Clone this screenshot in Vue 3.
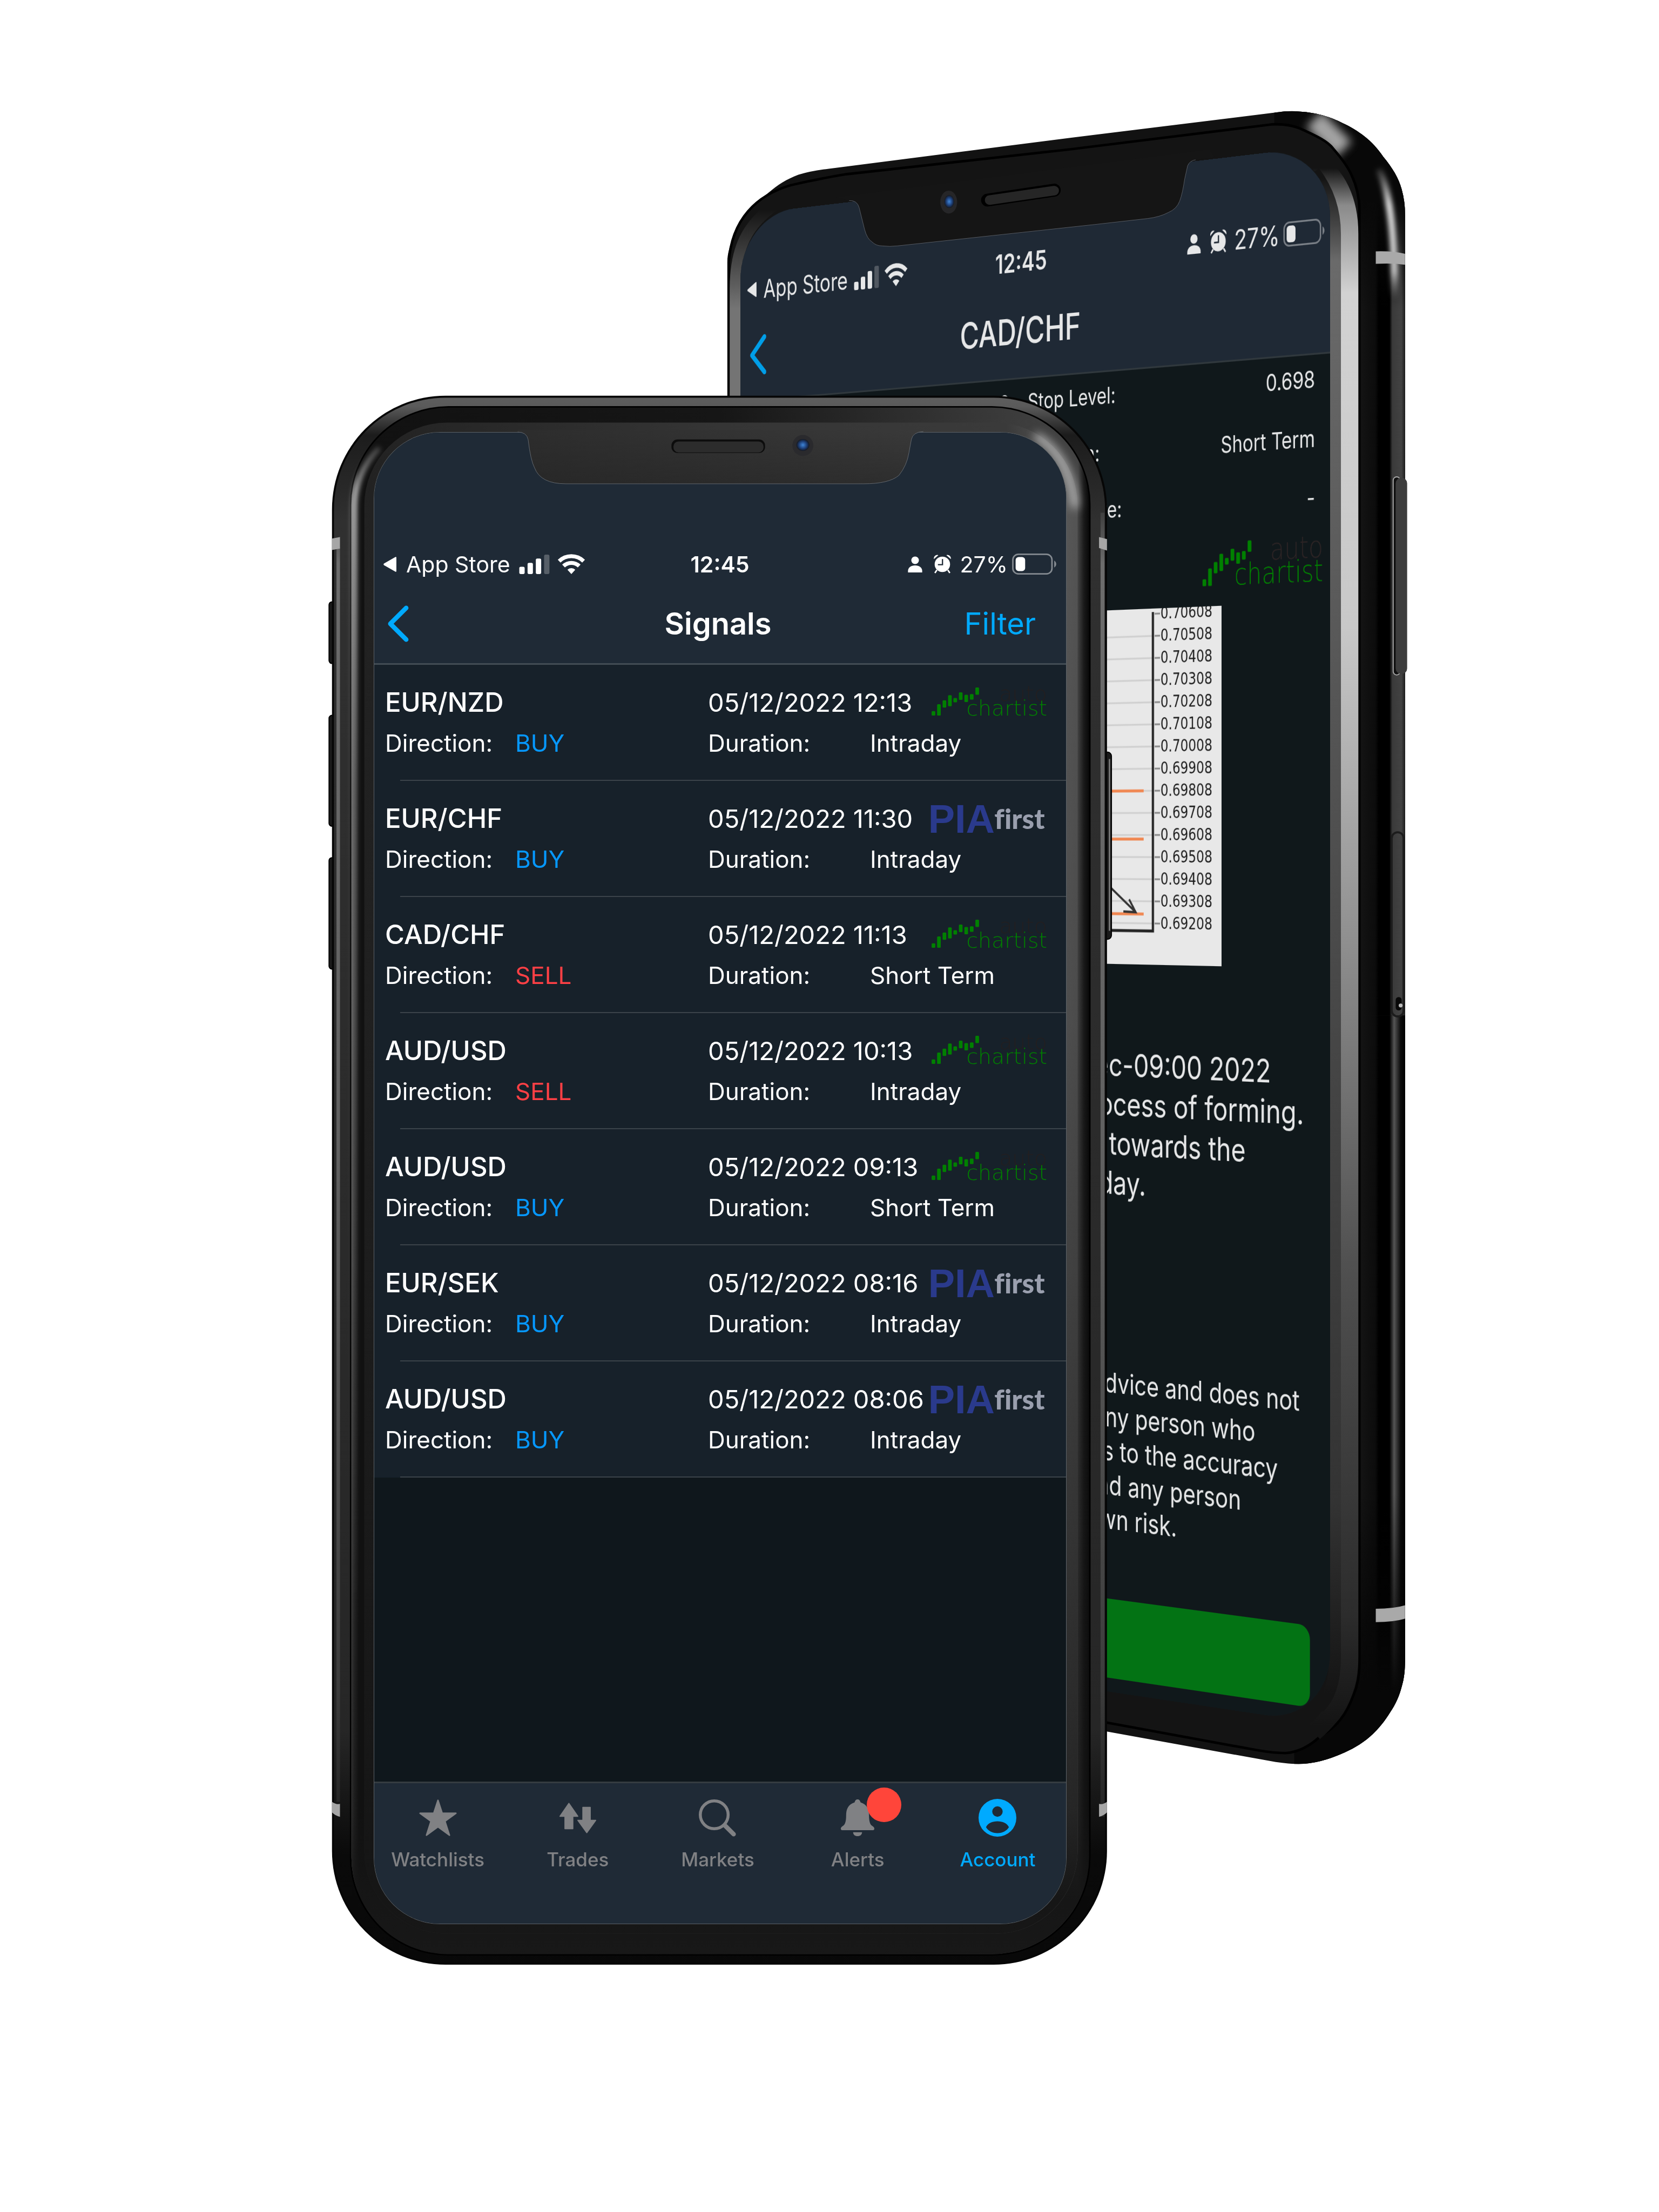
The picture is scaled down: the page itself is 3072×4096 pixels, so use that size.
<script setup>
const signals = [
  { pair: 'EUR/NZD', time: '05/12/2022 12:13', side: 'BUY', duration: 'Intraday', source: 'autochartist' },
  { pair: 'EUR/CHF', time: '05/12/2022 11:30', side: 'BUY', duration: 'Intraday', source: 'pia' },
  { pair: 'CAD/CHF', time: '05/12/2022 11:13', side: 'SELL', duration: 'Short Term', source: 'autochartist' },
  { pair: 'AUD/USD', time: '05/12/2022 10:13', side: 'SELL', duration: 'Intraday', source: 'autochartist' },
  { pair: 'AUD/USD', time: '05/12/2022 09:13', side: 'BUY', duration: 'Short Term', source: 'autochartist' },
  { pair: 'EUR/SEK', time: '05/12/2022 08:16', side: 'BUY', duration: 'Intraday', source: 'pia' },
  { pair: 'AUD/USD', time: '05/12/2022 08:06', side: 'BUY', duration: 'Intraday', source: 'pia' },
]

const tabs = [
  { name: 'Watchlists', icon: 'star' },
  { name: 'Trades', icon: 'trades' },
  { name: 'Markets', icon: 'search' },
  { name: 'Alerts', icon: 'bell', badge: true },
  { name: 'Account', icon: 'account', active: true },
]

// Candles of the Autochartist mark: x, top, bottom
const candles = [
  [278, 237, 264], [311, 196, 264], [344, 172, 216], [377, 141, 208], [409, 158, 184],
  [442, 124, 170], [475, 139, 183], [508, 135, 168], [541, 95, 139],
]

const levels = [
  '0.70608', '0.70508', '0.70408', '0.70308', '0.70208', '0.70108', '0.70008', '0.69908',
  '0.69808', '0.69708', '0.69608', '0.69508', '0.69408', '0.69308', '0.69208',
].map((label, i) => ({ label, y: 9 + 38 * i }))

const summary = [
  { text: 'Dec-09:00 2022', end: 1265 },
  { text: 'process of forming.', end: 1336 },
  { text: 'towards the', end: 1210 },
  { text: 'day.', end: 988 },
]

const disclaimer = [
  { text: 'advice and does not', end: 1327 },
  { text: 'any person who', end: 1231 },
  { text: 'as to the accuracy', end: 1280 },
  { text: 'and any person', end: 1200 },
  { text: 'own risk.', end: 1058 },
]
</script>

<template>
  <main class="stage">
    <svg class="defs" aria-hidden="true">
      <symbol id="i-caret" viewBox="0 0 26 28"><path d="M24 1.5v25q0 2-2 1L1 15.500q-1.500-1.500 0-3L22 .5q2-1 2 1z" fill="currentColor" /></symbol>
      <symbol id="i-bars" viewBox="0 0 62 40">
        <rect x="0" y="25" width="11" height="15" rx="3" fill="currentColor" />
        <rect x="17" y="17" width="11" height="23" rx="3" fill="currentColor" />
        <rect x="34" y="8" width="11" height="32" rx="3" fill="currentColor" />
        <rect x="51" y="0" width="11" height="40" rx="3" fill="currentColor" opacity=".25" />
      </symbol>
      <symbol id="i-wifi" viewBox="0 0 56 42">
        <g fill="none" stroke="currentColor" stroke-width="8">
          <path d="M3 14.500a36 36 0 0 1 50 0" />
          <path d="M12 24.500a23 23 0 0 1 32 0" />
        </g>
        <path d="M28 41l-8-9a11.500 11.500 0 0 1 16 0z" fill="currentColor" />
      </symbol>
      <symbol id="i-person" viewBox="0 0 28 32">
        <circle cx="14" cy="8" r="7.500" fill="currentColor" />
        <path d="M0 32v-3c0-7 6-11 14-11s14 4 14 11v3z" fill="currentColor" />
      </symbol>
      <symbol id="i-clock" viewBox="0 0 36 38">
        <path fill="currentColor" fill-rule="evenodd" d="M18 4a15.500 15.500 0 1 1 0 31a15.500 15.500 0 1 1 0-31zM17 9v10H9v2.500h10.500V9z" />
        <path d="M1 9a7 7 0 0 1 9-8zM35 9a7 7 0 0 0-9-8z" fill="currentColor" />
        <path d="M7 31l-4 6M29 31l4 6" stroke="currentColor" stroke-width="3" />
      </symbol>
      <symbol id="i-battery" viewBox="0 0 88 42">
        <rect x="1.500" y="1.500" width="78" height="39" rx="11" fill="none" stroke="currentColor" stroke-width="3" opacity=".45" />
        <rect x="7" y="7" width="19" height="28" rx="6" fill="currentColor" />
        <path d="M84 14q4 3 4 7t-4 7z" fill="currentColor" opacity=".45" />
      </symbol>
      <symbol id="i-back" viewBox="0 0 44 74"><path d="M38 6L7 37l31 31" fill="none" stroke="currentColor" stroke-width="9" stroke-linecap="round" stroke-linejoin="round" /></symbol>
      <symbol id="i-star" viewBox="0 0 76 76"><path d="M38 3l8.500 26H74L52 45l9 28-23-17-23 17 9-28L2 29h27.500z" fill="currentColor" stroke="currentColor" stroke-width="3" stroke-linejoin="round" /></symbol>
      <symbol id="i-trades" viewBox="0 0 76 76">
        <path d="M20 9l18 26H28v25H12V35H2zM56 68L38 43h10V17h15v26h11z" fill="currentColor" stroke="currentColor" stroke-width="2" stroke-linejoin="round" />
      </symbol>
      <symbol id="i-search" viewBox="0 0 76 76">
        <circle cx="31" cy="32" r="28" fill="none" stroke="currentColor" stroke-width="6" />
        <path d="M53 54l17 17" stroke="currentColor" stroke-width="9" stroke-linecap="round" />
      </symbol>
      <symbol id="i-bell" viewBox="0 0 76 76">
        <path d="M38 1c4 0 5 3 6 6 13 4 17 14 17 26 0 12 2 18 6 21 7 4 5 9 2 9H7c-3 0-5-5 2-9 4-3 6-9 6-21C15 21 19 11 32 7c1-3 2-6 6-6zM29 67h18c0 5-4 8-9 8s-9-3-9-8z" fill="currentColor" />
      </symbol>
      <symbol id="i-account" viewBox="0 0 76 76">
        <path fill="currentColor" fill-rule="evenodd" d="M38 0a38 38 0 1 1 0 76a38 38 0 1 1 0-76zM38 15a10.500 10.500 0 1 0 0 21a10.500 10.500 0 1 0 0-21zM15 57c4 7 13 12 23 12s19-5 23-12c-3-8-13-12-23-12s-20 4-23 12z" />
      </symbol>
    </svg>

    <!-- Rear phone: body -->
    <svg class="layer" viewBox="0 0 3333 4444" aria-hidden="true">
      <defs>
        <linearGradient id="rearSide" x1="2731" x2="2823" y1="0" y2="0" gradientUnits="userSpaceOnUse">
          <stop offset="0" stop-color="#141414" /><stop offset=".35" stop-color="#0c0c0c" />
          <stop offset=".42" stop-color="#000" /><stop offset=".66" stop-color="#000" />
          <stop offset=".72" stop-color="#3a3a3a" /><stop offset=".92" stop-color="#424242" /><stop offset="1" stop-color="#1c1c1c" />
        </linearGradient>
        <linearGradient id="rearSideLow" x1="2731" x2="2823" y1="0" y2="0" gradientUnits="userSpaceOnUse">
          <stop offset="0" stop-color="#141414" /><stop offset=".35" stop-color="#0c0c0c" />
          <stop offset=".42" stop-color="#000" /><stop offset=".66" stop-color="#000" />
          <stop offset=".76" stop-color="#555" /><stop offset=".9" stop-color="#0c0c0c" /><stop offset="1" stop-color="#000" />
        </linearGradient>
        <linearGradient id="rearSilver" x1="0" x2="0" y1="300" y2="3500" gradientUnits="userSpaceOnUse">
          <stop offset=".012" stop-color="#141414" /><stop offset=".035" stop-color="#8a8a8a" /><stop offset=".09" stop-color="#d2d2d2" />
          <stop offset=".3" stop-color="#c8c8c8" /><stop offset=".5" stop-color="#8e8e8e" />
          <stop offset=".7" stop-color="#505050" /><stop offset=".92" stop-color="#2c2c2c" /><stop offset=".99" stop-color="#141414" />
        </linearGradient>
        <linearGradient id="rearInner" x1="0" x2="0" y1="300" y2="3500" gradientUnits="userSpaceOnUse">
          <stop offset=".018" stop-color="#141414" /><stop offset=".07" stop-color="#6a6a6a" />
          <stop offset=".5" stop-color="#4a4a4a" /><stop offset=".85" stop-color="#333" /><stop offset=".97" stop-color="#141414" />
        </linearGradient>
        <linearGradient id="rearTop" x1="0" x2="0" y1="400" y2="620" gradientUnits="userSpaceOnUse">
          <stop offset="0" stop-color="#080808" /><stop offset="1" stop-color="#080808" stop-opacity="0" />
        </linearGradient>
        <linearGradient id="fadeDown" x1="0" x2="0" y1="3000" y2="3400" gradientUnits="userSpaceOnUse">
          <stop offset="0" stop-color="#000" stop-opacity="0" /><stop offset="1" stop-color="#070707" />
        </linearGradient>
        <linearGradient id="rearLeft" x1="0" x2="0" y1="420" y2="620" gradientUnits="userSpaceOnUse">
          <stop offset="0" stop-color="#141414" /><stop offset="1" stop-color="#747474" />
        </linearGradient>
        <linearGradient id="rearGlint" x1="0" x2="0" y1="330" y2="600" gradientUnits="userSpaceOnUse">
          <stop offset="0" stop-color="#fff" stop-opacity="0" /><stop offset=".3" stop-color="#eee" />
          <stop offset=".8" stop-color="#ccc" /><stop offset="1" stop-color="#888" stop-opacity="0" />
        </linearGradient>
        <filter id="soft" x="-50%" y="-50%" width="200%" height="200%"><feGaussianBlur stdDeviation="5" /></filter>
        <filter id="softer" x="-50%" y="-50%" width="200%" height="200%"><feGaussianBlur stdDeviation="9" /></filter>
        <clipPath id="rearClip">
          <path d="M1461 3300V527C1463 490 1474 482 1492 453C1508 426 1522 406 1543 388C1563 371 1580 360 1604 351Q1630 343 1665 339L2150 277L2563 226Q2590 222 2609 224C2650 226 2680 238 2701 249C2740 268 2762 290 2779 315C2798 338 2810 358 2816 380Q2823 405 2823 433V3331C2823 3360 2820 3376 2816 3389C2811 3408 2804 3424 2793 3440C2770 3478 2740 3504 2701 3521Q2650 3544 2609 3544Q2590 3544 2563 3540L2225 3479L1700 3385Z" />
        </clipPath>
      </defs>
      <g clip-path="url(#rearClip)">
        <rect x="1400" y="200" width="1440" height="3400" fill="#121212" />
        <rect x="2600" y="220" width="223" height="1820" fill="url(#rearSide)" />
        <rect x="2600" y="2040" width="223" height="1510" fill="url(#rearSideLow)" />
        <rect x="2600" y="3000" width="223" height="560" fill="url(#fadeDown)" />
        <rect x="2560" y="220" width="270" height="420" fill="url(#rearTop)" />
        <path d="M2640 240L2700 300" stroke="#d8d8d8" stroke-width="44" filter="url(#softer)" opacity=".75" />
        <path d="M2770 340Q2802 400 2802 600" fill="none" stroke="url(#rearGlint)" stroke-width="13" filter="url(#soft)" />
        <path d="M2764 505Q2800 504 2823 510V532Q2800 528 2764 530Z" fill="#a9a9a9" />
        <path d="M2764 3232Q2800 3232 2823 3225V3252Q2800 3259 2764 3259Z" fill="#a9a9a9" />
      </g>
      <path d="M1464 3300V527C1470 440 1520 392 1589 372Q1640 360 1700 350L2150 300L2554 250Q2585 248 2609 257C2650 275 2668 285 2678 298C2697 320 2708 335 2715 351Q2731 385 2731 421V3343Q2731 3378 2719 3406C2705 3445 2685 3470 2655 3486Q2620 3520 2582 3522Q2560 3522 2530 3517L2225 3461L1700 3380Z" fill="#141414" stroke="#000" stroke-width="5" />
      <path d="M2640 320Q2711 370 2711 470V3330Q2711 3420 2640 3480" fill="none" stroke="url(#rearSilver)" stroke-width="36" />
      <path d="M2640 345Q2682 400 2682 470V3330Q2682 3400 2650 3430" fill="none" stroke="url(#rearInner)" stroke-width="24" />
      <path d="M1560 410C1500 450 1477 500 1477 580V1000" fill="none" stroke="url(#rearLeft)" stroke-width="22" />
      <rect x="2799" y="958" width="14" height="398" rx="7" fill="#111" stroke="#aaa" stroke-width="2" />
      <rect x="2804" y="960" width="23" height="394" rx="11" fill="#3d3d3d" />
      <rect x="2796" y="1672" width="24" height="370" rx="12" fill="none" stroke="#1c1c1c" stroke-width="4" />
      <rect x="2804" y="2003" width="12" height="27" rx="6" fill="#080808" />
      <circle cx="2814" cy="2020" r="4" fill="#bbb" />
    </svg>

    <!-- Rear phone: screen, turned away to the left -->
    <div class="scene">
      <section class="rear" aria-label="CAD/CHF signal">
        <header class="rear-head">
          <div class="status rear-status">
            <span class="status-side">
              <svg class="caret"><use href="#i-caret" /></svg>
              <span>App Store</span>
              <svg class="bars"><use href="#i-bars" /></svg>
              <svg class="wifi"><use href="#i-wifi" /></svg>
            </span>
            <strong>12:45</strong>
            <span class="status-side end">
              <svg class="person"><use href="#i-person" /></svg>
              <svg class="clock"><use href="#i-clock" /></svg>
              <span>27%</span>
              <svg class="battery"><use href="#i-battery" /></svg>
            </span>
          </div>
          <div class="rear-nav">
            <button type="button" class="back" aria-label="Back"><svg><use href="#i-back" /></svg></button>
            <h2>CAD/CHF</h2>
          </div>
        </header>
        <dl class="facts">
          <div><dd class="first">0.700</dd><dt>Stop Level:</dt><dd>0.698</dd></div>
          <div><dt>Duration:</dt><dd>Short Term</dd></div>
          <div><dt>Expiry date:</dt><dd>-</dd></div>
        </dl>
        <svg class="rear-logo" viewBox="278 68 694 200">
          <g fill="#008000" transform="translate(0 -44) scale(1 1.16)">
            <rect v-for="c in candles" :key="c[0]" :x="c[0]" :y="c[1]" width="22" :height="c[2] - c[1]" rx="5" />
          </g>
          <g class="wordmark" text-anchor="end">
            <text x="972" y="157" fill="#2b2324">auto</text>
            <text x="972" y="262" fill="#008000">chartist</text>
          </g>
        </svg>
        <svg class="chart" viewBox="0 0 1097 612">
          <rect width="1097" height="612" fill="#e8e8e8" />
          <g stroke="#cfcfcf" stroke-width="3">
            <path v-for="l in levels.slice(1)" :key="l.label" :d="`M0 ${l.y}H944`" />
          </g>
          <g stroke="#8a8a8a" stroke-width="3">
            <path v-for="l in levels" :key="l.label" :d="`M948 ${l.y}h12`" />
          </g>
          <path d="M0 313H923M0 396H923M0 525H923" stroke="#f08650" stroke-width="5" />
          <path d="M780 430L905 522M890 500L905 522L877 521" fill="none" stroke="#333" stroke-width="4" />
          <path d="M944 6V554H0" fill="none" stroke="#222" stroke-width="5" />
          <g class="levels">
            <text v-for="l in levels" :key="l.label" x="961" :y="l.y + 9">{{ l.label }}</text>
          </g>
        </svg>
        <p class="summary">
          <span v-for="l in summary" :key="l.text" :style="{ width: l.end + 'px' }">{{ l.text }}</span>
        </p>
        <p class="disclaimer">
          <span v-for="l in disclaimer" :key="l.text" :style="{ width: l.end + 'px' }">{{ l.text }}</span>
        </p>
        <button type="button" class="trade" aria-label="Trade"></button>
      </section>
    </div>

    <!-- Rear notch and front body -->
    <svg class="layer" viewBox="0 0 3333 4444" aria-hidden="true">
      <defs>
        <linearGradient id="rim" x1="0" x2="0" y1="795" y2="3947" gradientUnits="userSpaceOnUse">
          <stop offset="0" stop-color="#5e5e5e" /><stop offset=".007" stop-color="#5a5a5a" /><stop offset=".025" stop-color="#1c1c1c" />
          <stop offset=".08" stop-color="#303030" /><stop offset=".85" stop-color="#262626" /><stop offset=".93" stop-color="#0a0a0a" /><stop offset="1" stop-color="#080808" />
        </linearGradient>
        <linearGradient id="bevel" x1="706" x2="2188" y1="0" y2="0" gradientUnits="userSpaceOnUse">
          <stop offset="0" stop-color="#6a6a6a" /><stop offset=".004" stop-color="#3a3a3a" /><stop offset=".01" stop-color="#111" />
          <stop offset=".5" stop-color="#161616" /><stop offset=".985" stop-color="#444" /><stop offset=".993" stop-color="#1a1a1a" /><stop offset="1" stop-color="#080808" />
        </linearGradient>
        <linearGradient id="glass" x1="730" x2="2165" y1="0" y2="0" gradientUnits="userSpaceOnUse">
          <stop offset="0" stop-color="#222" /><stop offset=".5" stop-color="#353535" /><stop offset=".9" stop-color="#3a3a3a" />
          <stop offset=".98" stop-color="#5a5a5a" /><stop offset="1" stop-color="#555" />
        </linearGradient>
        <linearGradient id="shade" x1="0" x2="0" y1="795" y2="3947" gradientUnits="userSpaceOnUse">
          <stop offset="0" stop-color="#111" stop-opacity="0" /><stop offset=".4" stop-color="#111" stop-opacity=".15" />
          <stop offset=".9" stop-color="#111" stop-opacity=".7" /><stop offset=".96" stop-color="#161616" /><stop offset="1" stop-color="#181818" />
        </linearGradient>
        <linearGradient id="edge" x1="0" x2="0" y1="1000" y2="3660" gradientUnits="userSpaceOnUse">
          <stop offset="0" stop-color="#333" /><stop offset=".05" stop-color="#6c6c6c" /><stop offset=".5" stop-color="#606060" />
          <stop offset=".9" stop-color="#3c3c3c" /><stop offset="1" stop-color="#222" />
        </linearGradient>
        <linearGradient id="glint" x1="0" x2="0" y1="860" y2="3300" gradientUnits="userSpaceOnUse">
          <stop offset="0" stop-color="#fff" stop-opacity="0" /><stop offset=".05" stop-color="#fff" stop-opacity=".75" />
          <stop offset=".3" stop-color="#ccc" stop-opacity=".4" /><stop offset="1" stop-color="#888" stop-opacity="0" />
        </linearGradient>
        <radialGradient id="lens"><stop offset="0" stop-color="#3f86d8" /><stop offset=".6" stop-color="#1d3f78" /><stop offset="1" stop-color="#15181f" /></radialGradient>
      </defs>
      <path d="M1680 396L1706 403Q1722 402 1726 417L1737 461Q1742 480 1752 486Q1760 494 1772 494Q1788 496 1803 494L2200 451L2306 439Q2330 436 2347 427Q2364 420 2370 404Q2376 388 2380 360L2386 333Q2390 323 2402 321L2440 316L2430 300Z" fill="#151515" />
      <path d="M1706 403Q1722 402 1726 417L1737 461Q1742 480 1752 486Q1760 494 1772 494Q1788 496 1803 494L2200 451L2306 439Q2330 436 2347 427Q2364 420 2370 404Q2376 388 2380 360L2386 333Q2390 323 2402 321" fill="none" stroke="#5a5f66" stroke-width="1" />
      <ellipse cx="1906" cy="406" rx="17" ry="23" fill="#262628" />
      <ellipse cx="1907" cy="405" rx="10" ry="13" fill="url(#lens)" />
      <path d="M1984 402L2118 382" stroke="#000" stroke-width="26" stroke-linecap="round" />
      <path d="M1988 402L2118 383" stroke="#262626" stroke-width="19" stroke-linecap="round" />

      <g fill="#1a1a1a" stroke="#000" stroke-width="2">
        <rect x="661" y="1209" width="14" height="124" rx="6" />
        <rect x="661" y="1437" width="14" height="223" rx="6" />
        <rect x="661" y="1723" width="14" height="224" rx="6" />
        <rect x="2214" y="1511" width="19" height="376" rx="8" />
      </g>
      <path d="M2229 1525V1870" stroke="#777" stroke-width="3" />
      <rect x="667" y="795" width="1557" height="3152" rx="228" fill="#060606" />
      <rect x="671" y="799" width="1549" height="3144" rx="224" fill="url(#rim)" />
      <rect x="2211" y="1030" width="8" height="2620" fill="url(#edge)" />
      <rect x="676" y="1100" width="7" height="2520" fill="url(#edge)" />
      <path d="M667 1082L683 1079V1102L667 1105ZM2208 1079L2224 1083V1106L2208 1101ZM667 3620Q675 3626 683 3624V3650Q674 3648 667 3641ZM2224 3620Q2216 3626 2208 3624V3650Q2217 3648 2224 3641Z" fill="#a6a6a6" />
      <rect x="703" y="816" width="1488" height="3113" rx="198" fill="#000" />
      <rect x="706" y="819" width="1482" height="3107" rx="195" fill="url(#bevel)" />
      <rect x="706" y="819" width="1482" height="3107" rx="195" fill="url(#shade)" />
      <path d="M712 3200V1020Q712 950 762 900" fill="none" stroke="url(#glint)" stroke-width="9" filter="url(#soft)" />
      <rect x="732" y="849" width="1433" height="3036" rx="166" fill="url(#glass)" />
      <rect x="732" y="849" width="1433" height="3036" rx="166" fill="url(#shade)" />
      <path d="M2080 875Q2150 915 2160 1020" fill="none" stroke="#ddd" stroke-width="14" filter="url(#softer)" opacity=".8" />
    </svg>

    <!-- Front phone: screen -->
    <section class="front" aria-label="Signals">
      <header class="front-head">
        <div class="status">
          <span class="status-side">
            <svg class="caret"><use href="#i-caret" /></svg>
            <span>App Store</span>
            <svg class="bars"><use href="#i-bars" /></svg>
            <svg class="wifi"><use href="#i-wifi" /></svg>
          </span>
          <strong>12:45</strong>
          <span class="status-side end">
            <svg class="person"><use href="#i-person" /></svg>
            <svg class="clock"><use href="#i-clock" /></svg>
            <span>27%</span>
            <svg class="battery"><use href="#i-battery" /></svg>
          </span>
        </div>
        <div class="front-nav">
          <button type="button" class="back" aria-label="Back"><svg><use href="#i-back" /></svg></button>
          <h1>Signals</h1>
          <button type="button" class="filter">Filter</button>
        </div>
      </header>

      <ul class="signals">
        <li v-for="(s, i) in signals" :key="i">
          <div class="top-line">
            <span class="pair">{{ s.pair }}</span>
            <time>{{ s.time }}</time>
            <svg v-if="s.source === 'autochartist'" class="logo" viewBox="278 95 694 172">
              <g fill="#008000">
                <rect v-for="c in candles" :key="c[0]" :x="c[0]" :y="c[1]" width="22" :height="c[2] - c[1]" rx="5" />
              </g>
              <g class="wordmark" text-anchor="end">
                <text x="972" y="175" fill="#231f20">auto</text>
                <text x="972" y="264" fill="#008000">chartist</text>
              </g>
            </svg>
            <svg v-else class="logo pia" viewBox="278 790 694 180">
              <text class="pia-name" x="254" y="968">PIA</text>
              <text class="pia-first" x="961" y="943" text-anchor="end">first</text>
            </svg>
          </div>
          <div class="bottom-line">
            <span>Direction:</span>
            <span :class="s.side === 'BUY' ? 'buy' : 'sell'">{{ s.side }}</span>
            <span>Duration:</span>
            <span>{{ s.duration }}</span>
          </div>
        </li>
      </ul>

      <nav class="tabs">
        <a v-for="t in tabs" :key="t.name" href="#" :class="{ active: t.active }">
          <span class="tab-icon">
            <svg><use :href="'#i-' + t.icon" /></svg>
            <i v-if="t.badge" class="badge"></i>
          </span>
          {{ t.name }}
        </a>
      </nav>
    </section>

    <!-- Front notch -->
    <svg class="layer" viewBox="0 0 3333 4444" aria-hidden="true">
      <defs>
        <linearGradient id="notch" x1="1060" x2="1850" y1="0" y2="0" gradientUnits="userSpaceOnUse">
          <stop offset="0" stop-color="#2d2d2d" /><stop offset="1" stop-color="#393939" />
        </linearGradient>
        <linearGradient id="notchShade" x1="0" x2="0" y1="868" y2="972" gradientUnits="userSpaceOnUse">
          <stop offset="0" stop-color="#222" stop-opacity="0" /><stop offset="1" stop-color="#222" stop-opacity=".5" />
        </linearGradient>
      </defs>
      <path d="M1040 864V868Q1058 868 1061 883Q1066 925 1074 940Q1086 972 1137 972H1735Q1786 972 1806 955Q1822 935 1826 910L1831 883Q1834 868 1855 867V864Z" fill="url(#notch)" />
      <path d="M1040 868Q1058 868 1061 883Q1066 925 1074 940Q1086 972 1137 972H1735Q1786 972 1806 955Q1822 935 1826 910L1831 883Q1834 868 1855 867" fill="url(#notchShade)" stroke="#666c72" stroke-width="1" />
      <rect x="1349" y="883" width="188" height="27" rx="12" fill="#0c0c0c" />
      <rect x="1353" y="887" width="181" height="22" rx="10" fill="#2c2c2c" />
      <circle cx="1613" cy="895" r="21" fill="#2a2a2d" />
      <ellipse cx="1613" cy="894" rx="13" ry="12" fill="url(#lens)" />
    </svg>
  </main>
</template>

<style>
body {
  margin: 0;
  background: #fff;
}
</style>

<style scoped>
.stage {
  position: relative;
  width: 100%;
  aspect-ratio: 3 / 4;
  overflow: hidden;
  background: #fff;
  font-family: Inter, "Liberation Sans", sans-serif;
  color: #fff;
}
.defs {
  position: absolute;
  width: 0;
  height: 0;
}
.layer {
  position: absolute;
  inset: 0;
  width: 100%;
  height: 100%;
  pointer-events: none;
}
h1,
h2,
p,
dl,
dd,
ul {
  margin: 0;
  padding: 0;
}
button {
  padding: 0;
  border: 0;
  background: none;
  font: inherit;
  cursor: pointer;
}
svg {
  display: block;
}

/* Status bar, shared by both phones */
.status {
  display: grid;
  grid-template-columns: 1fr auto 1fr;
  align-items: center;
  height: 48px;
  padding: 0 18px 0 17px;
  font-size: 41px;
}
.status strong {
  font-weight: 600;
}
.status-side {
  display: flex;
  align-items: center;
}
.status-side.end {
  justify-content: flex-end;
}
.caret {
  width: 26px;
  height: 28px;
  margin-right: 16px;
}
.bars {
  width: 57px;
  height: 36px;
  margin-left: 16px;
}
.wifi {
  width: 52px;
  height: 38px;
  margin-left: 14px;
}
.person {
  width: 27px;
  height: 30px;
  margin-right: 20px;
}
.clock {
  width: 34px;
  height: 35px;
  margin-right: 16px;
}
.battery {
  width: 82px;
  height: 39px;
  margin-left: 8px;
}

/* Front screen */
.front {
  position: absolute;
  left: 22.56%;
  top: 19.55%;
  width: 41.7%;
  height: 67.42%;
  display: flex;
  flex-direction: column;
  overflow: hidden;
  box-sizing: border-box;
  border-radius: 122px;
  background: #0f171c;
  box-shadow: 0 0 0 1px #5b6167;
}
.front-head {
  height: 430px;
  box-sizing: border-box;
  padding-top: 219px;
  border-bottom: 3px solid #424c54;
  background: #1f2a36;
}
.front-nav {
  display: grid;
  grid-template-columns: 1fr auto 1fr;
  align-items: center;
  height: 174px;
  padding: 0 56px 0 22px;
}
.front-nav h1 {
  margin-left: 26px;
  font-size: 56px;
  font-weight: 600;
}
.back {
  justify-self: start;
  color: #00aaff;
}
.back svg {
  width: 44px;
  height: 70px;
}
.filter {
  justify-self: end;
  color: #00aaff;
  font-size: 56px;
}
.signals {
  list-style: none;
  background: #17212a;
}
.signals li {
  height: 215px;
  box-sizing: border-box;
  padding: 42px 0 0 20px;
  background: linear-gradient(#3b434a, #3b434a) 48px 100% / 100% 2px no-repeat;
}
.top-line {
  display: grid;
  grid-template-columns: 598fr 414fr 249fr;
  height: 56px;
  line-height: 56px;
}
.pair {
  font-size: 49px;
  font-weight: 500;
}
time {
  font-size: 47px;
}
.bottom-line {
  display: grid;
  grid-template-columns: 241fr 357fr 300fr 363fr;
  height: 52px;
  margin-top: 21px;
  font-size: 44px;
  line-height: 52px;
}
.top-line > *,
.bottom-line > * {
  min-width: 0;
  white-space: nowrap;
}
.buy {
  color: #0698ff;
}
.sell {
  color: #ff4045;
}
.logo {
  width: 214px;
  height: 53px;
  overflow: visible;
}
.logo.pia {
  height: 55px;
}
.wordmark {
  font-family: "DejaVu Sans Light", "DejaVu Sans", sans-serif;
  font-size: 128px;
  font-weight: 200;
}
.pia-name {
  font-family: "Liberation Sans", sans-serif;
  font-size: 242px;
  font-weight: 700;
  fill: #2a3a8c;
}
.pia-first {
  font-family: Lato, sans-serif;
  font-size: 168px;
  font-weight: 900;
  font-variant-ligatures: none;
  fill: #9a9fae;
}
.tabs {
  flex: none;
  display: grid;
  grid-template-columns: repeat(5, 1fr);
  align-items: start;
  height: 263px;
  box-sizing: border-box;
  margin: auto -3px 0 -12px;
  padding-top: 29px;
  border-top: 3px solid #353c41;
  background: #1f2a36;
}
.tabs a {
  display: flex;
  flex-direction: column;
  align-items: center;
  color: #808184;
  font-size: 35px;
  font-weight: 500;
  line-height: 40px;
  text-decoration: none;
}
.tabs a.active {
  color: #00aaff;
}
.tab-icon {
  position: relative;
  margin-bottom: 22px;
}
.tab-icon svg {
  width: 70px;
  height: 70px;
}
.badge {
  position: absolute;
  top: -21px;
  right: -46px;
  width: 64px;
  height: 64px;
  border-radius: 50%;
  background: #ff453a;
}

/* Rear screen: a plane swung about its left edge */
.scene {
  position: absolute;
  inset: 0;
  perspective: 9842px;
  perspective-origin: 44.63% 38.03%;
}
.rear {
  position: absolute;
  left: 44.63%;
  top: 9.72%;
  width: 1392px;
  height: 2632px;
  overflow: hidden;
  border-radius: 140px / 120px;
  background: #10181b;
  color: #e6e7e8;
  transform: rotateY(-45.1deg);
  transform-origin: 0 50%;
}
.rear-head {
  height: 347px;
  box-sizing: border-box;
  padding-top: 113px;
  border-bottom: 3px solid #30383d;
  background: #1f2935;
}
.rear-status {
  padding: 0 12px 0 18px;
  font-size: 46px;
}
.rear-status .bars {
  width: 62px;
  height: 42px;
}
.rear-status .wifi {
  width: 57px;
  height: 44px;
}
.rear-status .person {
  width: 30px;
  height: 34px;
}
.rear-status .clock {
  width: 38px;
  height: 40px;
}
.rear-status .battery {
  width: 88px;
  height: 42px;
}
.rear-nav {
  position: relative;
  display: grid;
  place-items: center;
  height: 202px;
}
.rear-nav .back {
  position: absolute;
  left: 23px;
  color: #009ee8;
}
.rear-nav .back svg {
  width: 46px;
  height: 78px;
}
.rear-nav h2 {
  font-size: 63px;
  font-weight: 500;
}
.facts {
  display: flex;
  flex-direction: column;
  gap: 17px;
  padding-right: 32px;
  font-size: 39px;
  line-height: 82px;
}
.facts div {
  position: relative;
  display: flex;
  justify-content: space-between;
  padding-left: 715px;
}
.facts .first {
  position: absolute;
  left: 0;
  width: 672px;
  text-align: right;
}
.rear-logo {
  width: 262px;
  height: 76px;
  margin: 25px 15px 0 auto;
  overflow: visible;
}
.rear-logo .wordmark {
  font-size: 134px;
}
.chart {
  width: 1097px;
  height: 612px;
  margin: 32px 0 0 60px;
}
.levels {
  font-family: "DejaVu Sans", sans-serif;
  font-size: 28px;
  fill: #1c1c1c;
}
.summary,
.disclaimer {
  display: flex;
  flex-direction: column;
  text-align: right;
  white-space: nowrap;
}
.summary {
  margin-top: 140px;
  font-size: 55px;
  line-height: 68px;
}
.disclaimer {
  margin-top: 283px;
  font-size: 48px;
  line-height: 59px;
}
.trade {
  display: block;
  width: 1306px;
  height: 137px;
  margin: 109px 0 0 43px;
  border-radius: 24px;
  background: #037314;
}
</style>
